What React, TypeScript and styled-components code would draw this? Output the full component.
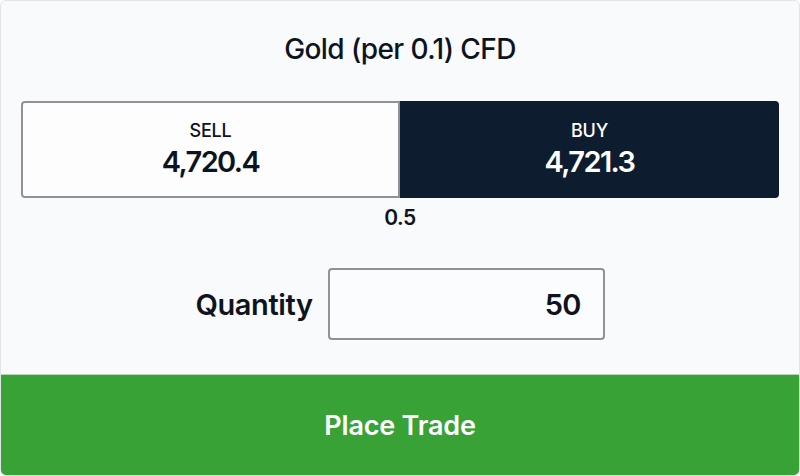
import React from "react";
import styled, { createGlobalStyle } from "styled-components";

const GlobalStyle = createGlobalStyle`
  body {
    margin: 0;
    font-family: Inter, "Noto Sans", sans-serif;
    color: #0d1420;
  }
`;

export default function App() {
  return (
    <>
      <GlobalStyle />
      <Card>
        <Body>
          <Title>Gold (per 0.1) CFD</Title>
          <PriceRow>
            <PriceBox side="sell">
              <Side>SELL</Side>
              <Price>4,720.4</Price>
            </PriceBox>
            <PriceBox side="buy">
              <Side>BUY</Side>
              <Price>4,721.3</Price>
            </PriceBox>
          </PriceRow>
          <Spread>0.5</Spread>
          <QuantityRow>
            <QuantityLabel>Quantity</QuantityLabel>
            <QuantityInput defaultValue="50" />
          </QuantityRow>
        </Body>
        <TradeButton>Place Trade</TradeButton>
      </Card>
    </>
  );
}

const Card = styled.div`
  box-sizing: border-box;
  width: 800px;
  height: 476px;
  display: flex;
  flex-direction: column;
  background: #f9fafc;
  border: 1px solid #e1e4e9;
  border-radius: 6px;
  overflow: hidden;
`;

const Body = styled.div`
  display: flex;
  flex-direction: column;
  align-items: center;
  padding: 32px 20px 34px;
`;

const Title = styled.div`
  font-size: 28px;
  line-height: 32px;
  font-weight: 550;
  letter-spacing: -0.6px;
`;

const PriceRow = styled.div`
  margin-top: 36px;
  align-self: stretch;
  display: flex;
  height: 97px;
`;

const PriceBox = styled.div<{ side: "sell" | "buy" }>`
  box-sizing: border-box;
  flex: 1;
  display: flex;
  flex-direction: column;
  align-items: center;
  justify-content: center;
  gap: 3px;
  background: ${(p) => (p.side === "buy" ? "#0e1c30" : "#fdfdfe")};
  color: ${(p) => (p.side === "buy" ? "#ffffff" : "#0d1420")};
  border: 2px solid ${(p) => (p.side === "buy" ? "#0e1c30" : "#909295")};
  border-radius: ${(p) => (p.side === "buy" ? "0 4px 4px 0" : "4px 0 0 4px")};
`;

const Side = styled.div`
  font-size: 18px;
  line-height: 22px;
  font-weight: 500;
  letter-spacing: -0.2px;
`;

const Price = styled.div`
  font-size: 29px;
  line-height: 34px;
  font-weight: 600;
  letter-spacing: -1.6px;
`;

const Spread = styled.div`
  margin-top: 8px;
  font-size: 21px;
  line-height: 24px;
  font-weight: 600;
  letter-spacing: -0.5px;
`;

const QuantityRow = styled.div`
  margin-top: 38px;
  display: flex;
  align-items: center;
  gap: 15px;
`;

const QuantityLabel = styled.label`
  font-size: 29px;
  font-weight: 600;
  letter-spacing: -0.4px;
`;

const QuantityInput = styled.input`
  box-sizing: border-box;
  width: 277px;
  height: 72px;
  padding: 0 22px;
  background: #fbfcfd;
  border: 2px solid #909295;
  border-radius: 4px;
  text-align: right;
  font-family: Inter, "Noto Sans", sans-serif;
  font-size: 29px;
  font-weight: 600;
  letter-spacing: -0.8px;
  color: #0d1420;
  outline: none;
`;

const TradeButton = styled.button`
  flex: 1;
  border: none;
  border-top: 1px solid #b9d8b6;
  background: #38a236;
  color: #ffffff;
  font-family: Inter, "Noto Sans", sans-serif;
  font-size: 27px;
  font-weight: 600;
  letter-spacing: -0.2px;
  cursor: pointer;
`;
